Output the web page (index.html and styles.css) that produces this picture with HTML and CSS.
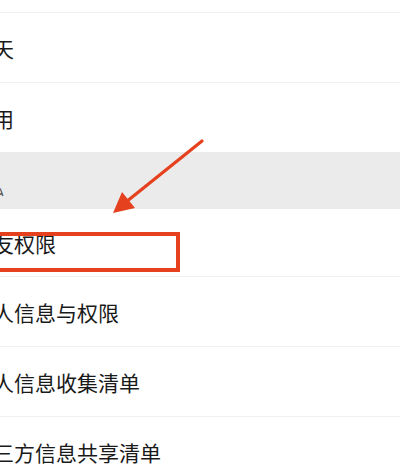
FILE: index.html
```html
<!DOCTYPE html>
<html lang="zh-CN">
<head>
    <meta charset="UTF-8">
    <meta name="viewport" content="width=device-width, initial-scale=1.0">
    <title>设置</title>
    <link rel="stylesheet" href="styles.css">
</head>
<body>
    <div class="screen">
        <div class="top-strip"></div>
        <ul class="menu">
            <li class="item"><span class="label">聊天</span></li>
            <li class="item"><span class="label">通用</span></li>
        </ul>
        <div class="section-head"><span class="label">隐私</span></div>
        <ul class="menu">
            <li class="item"><span class="label">朋友权限</span></li>
            <li class="item"><span class="label">个人信息与权限</span></li>
            <li class="item"><span class="label">个人信息收集清单</span></li>
            <li class="item"><span class="label">第三方信息共享清单</span></li>
        </ul>

        <!-- annotation drawn over the screenshot -->
        <div class="highlight"></div>
        <svg class="arrow" width="400" height="473" viewBox="0 0 400 473">
            <line x1="202" y1="141" x2="126" y2="202" stroke="#e6411e" stroke-width="3.2" stroke-linecap="round"/>
            <polygon points="113,213 122,192 135,208" fill="#e6411e"/>
        </svg>
    </div>
</body>
</html>
```

FILE: styles.css
```css
body {
    margin: 0;
    font-family: "Noto Sans CJK SC", "Noto Sans", sans-serif;
    background: #ffffff;
    color: #1a1a1a;
    overflow: hidden;
}
.screen {
    position: relative;
    width: 400px;
    height: 473px;
    overflow: hidden;
}
.top-strip {
    height: 12px;
    border-bottom: 1px solid #f1f1f1;
}
.menu {
    list-style: none;
    margin: 0;
    padding: 0;
}
.item {
    height: 69px;
    display: flex;
    align-items: center;
    border-bottom: 1px solid #f2f2f2;
    font-size: 21px;
}
.section-head + .menu .item:first-child {
    height: 67px;
}
.label {
    margin-left: -28px;
    white-space: nowrap;
}
.section-head {
    height: 57px;
    background: #ebebeb;
    display: flex;
    align-items: flex-end;
    padding-bottom: 0;
    font-size: 16px;
    color: #555;
    box-sizing: border-box;
    padding-bottom: 9px;
    margin-top: -1px;
}
.highlight {
    position: absolute;
    left: -10px;
    top: 232px;
    width: 182px;
    height: 32px;
    border: 4px solid #e6411e;
}
.arrow {
    position: absolute;
    left: 0;
    top: 0;
}
```
